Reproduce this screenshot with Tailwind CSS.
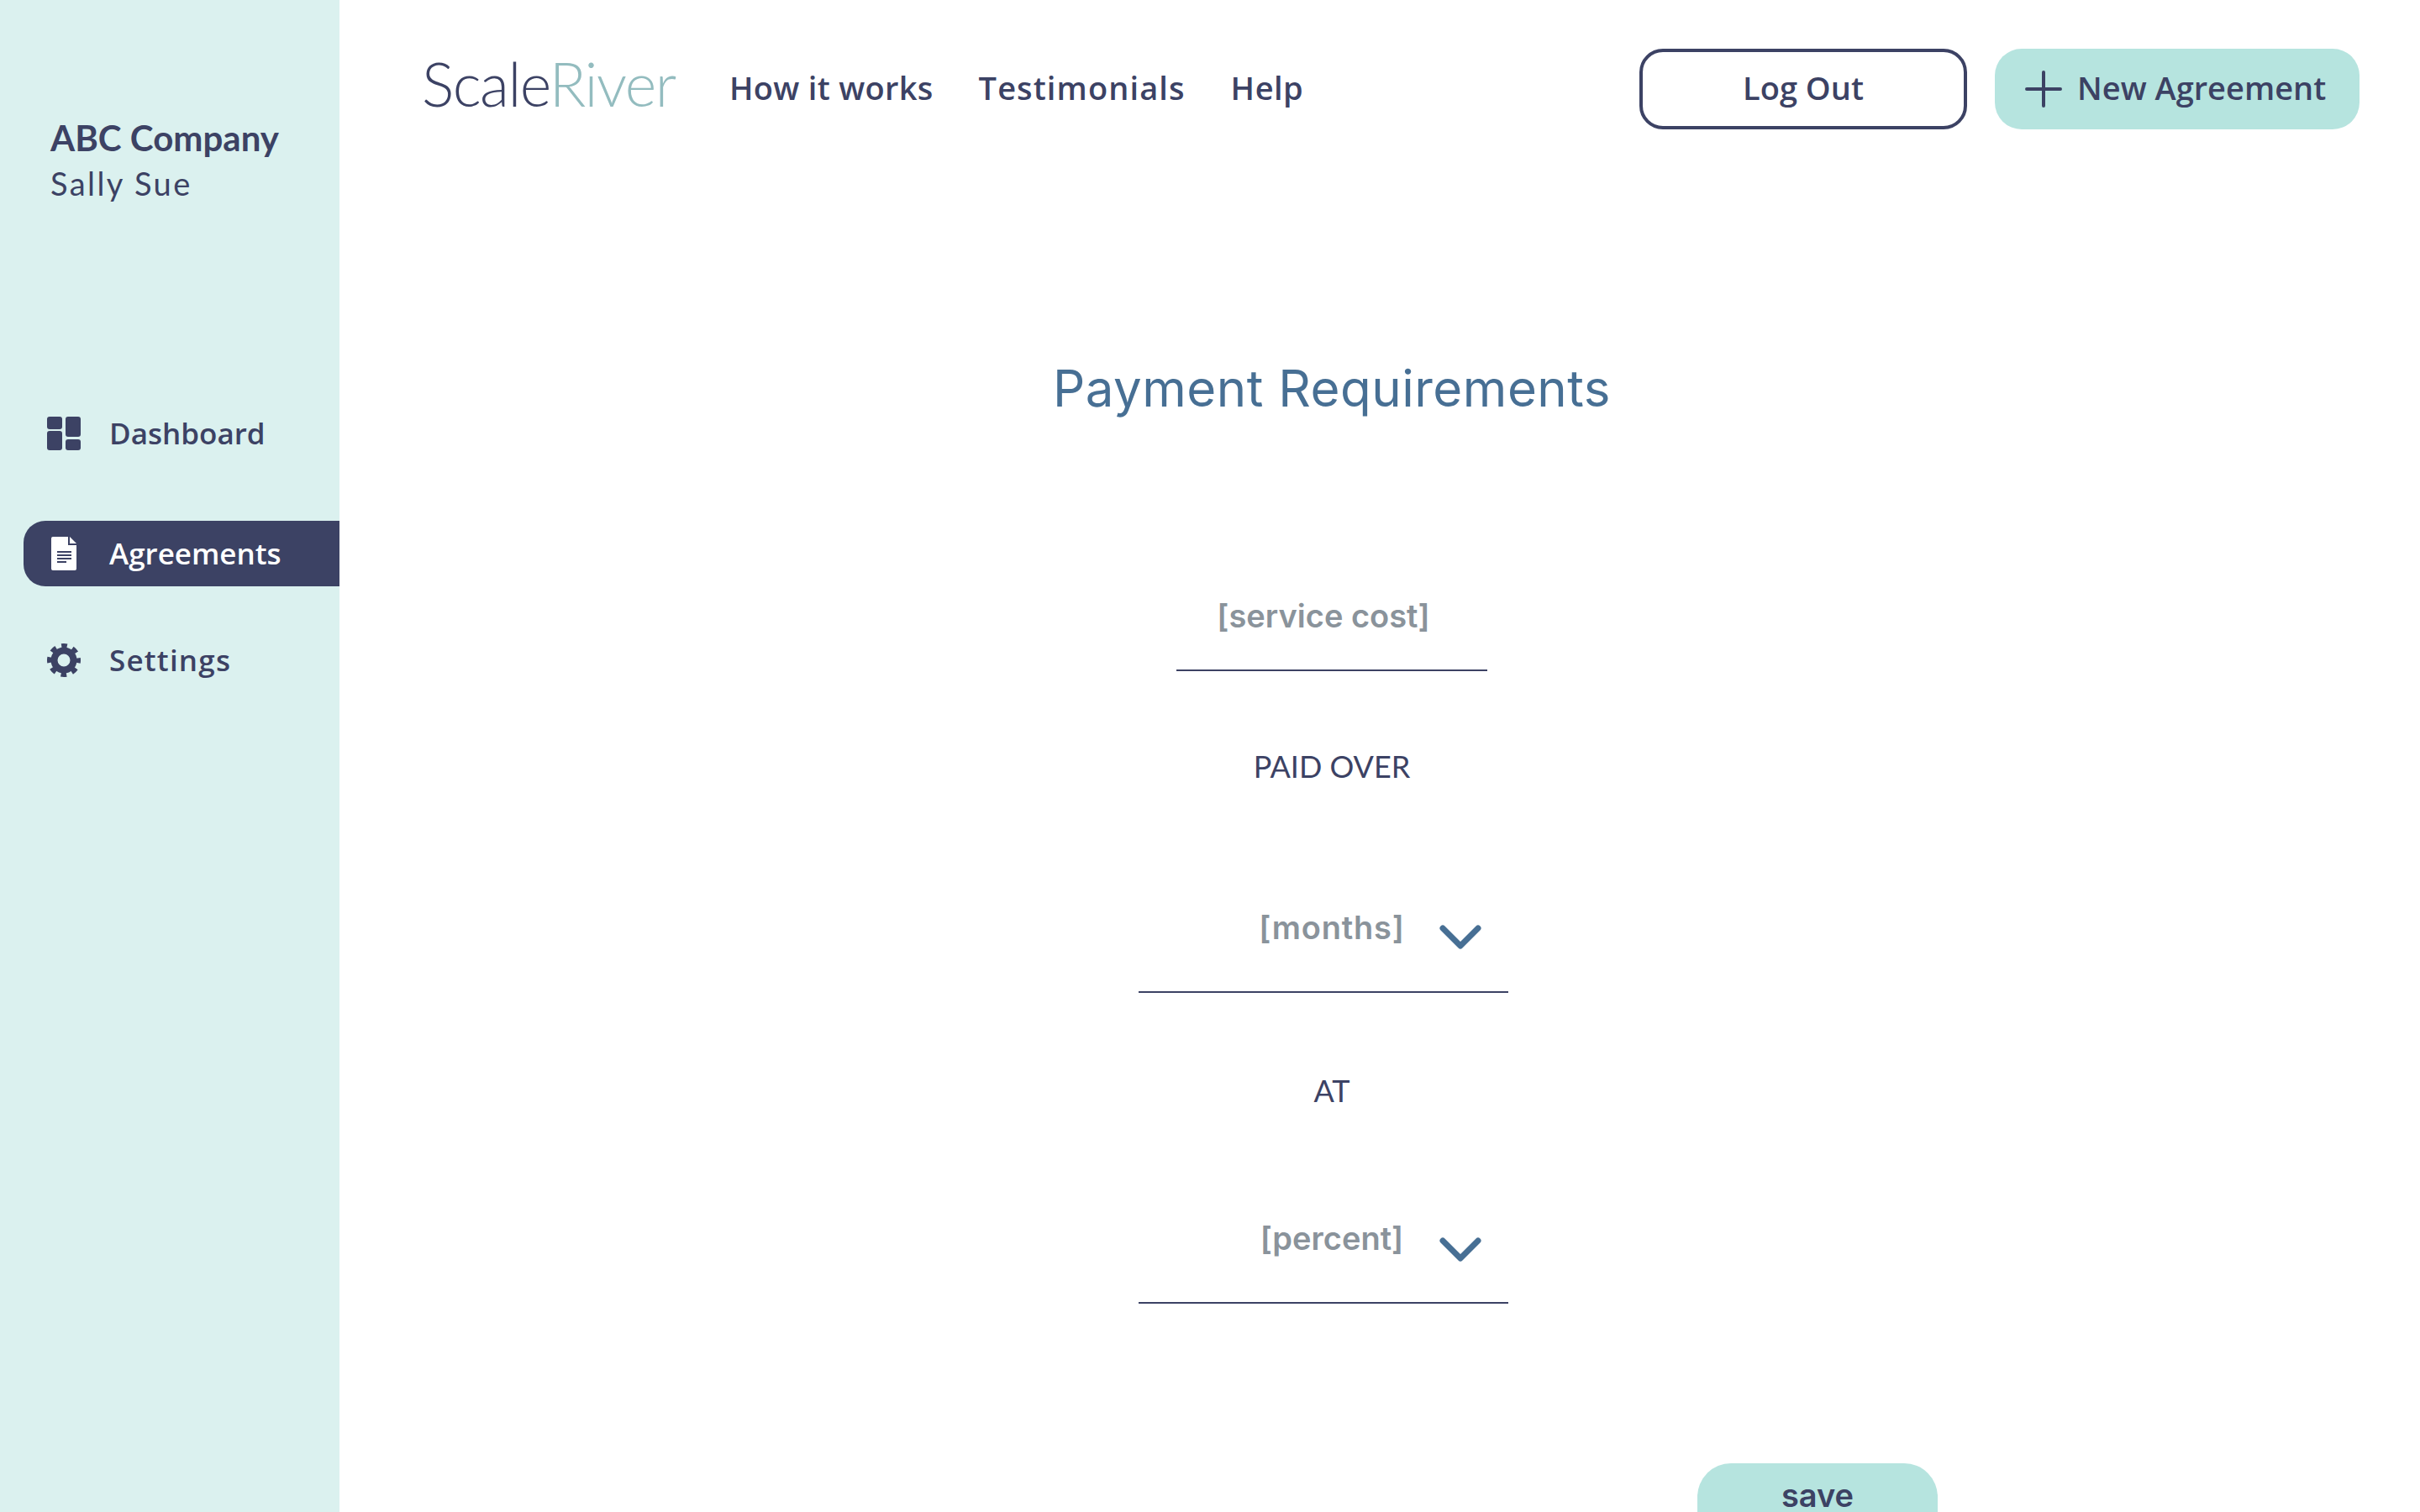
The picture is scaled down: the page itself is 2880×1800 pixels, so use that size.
<!DOCTYPE html>
<html lang="en">
<head>
    <meta charset="UTF-8">
    <title>Payment Requirements</title>
    <script src="https://cdn.jsdelivr.net/npm/@tailwindcss/browser@4"></script>
</head>
<body class="bg-white">
    <div class="flex w-[2880px] h-[1800px] overflow-hidden font-['Open_Sans',sans-serif] text-[#3c4264]">
        <!-- Sidebar -->
        <aside class="w-[404px] shrink-0 bg-[#dbf1ef] pt-[138px]">
            <div class="pl-[60px]">
                <div class="text-[42px] leading-[52px] font-bold font-['Lato',sans-serif]">ABC Company</div>
                <div class="text-[38px] leading-[56px] tracking-[2.4px] font-['Lato',sans-serif]">Sally Sue</div>
            </div>
            <nav class="mt-[231px] pl-[28px] text-[35px] leading-[48px] font-semibold">
                <a class="flex items-center h-[78px] pl-[28px] gap-[34px]">
                    <svg class="w-[40px] h-[40px]" viewBox="0 0 40 40" fill="#3c4264"><rect x="0" y="0" width="18" height="15" rx="3"/><rect x="0" y="17" width="18" height="23" rx="3"/><rect x="22" y="0" width="18" height="24" rx="3"/><rect x="22" y="27" width="18" height="13" rx="3"/></svg>
                    <span>Dashboard</span>
                </a>
                <a class="flex items-center h-[78px] mt-[65px] pl-[33px] gap-[39px] bg-[#3c4264] text-white rounded-l-[26px]">
                    <svg class="w-[30px] h-[40px]" viewBox="0 0 30 40"><path fill="#fff" d="M2 0h18v10h10v28a2 2 0 0 1-2 2H2a2 2 0 0 1-2-2V2a2 2 0 0 1 2-2z"/><path fill="#fff" d="M22 0l8 8h-8z"/><path fill="#3c4264" d="M7 17h17v2H7zM7 21h17v2H7zM7 25h17v2H7zM7 29h11v2H7z"/></svg>
                    <span>Agreements</span>
                </a>
                <a class="flex items-center h-[78px] mt-[49px] pl-[28px] gap-[34px]">
                    <svg class="w-[40px] h-[40px]" viewBox="0 0 40 40" fill="none" stroke="#3c4264"><circle cx="20" cy="20" r="11.5" stroke-width="8"/><circle cx="20" cy="20" r="17.5" stroke-width="5" stroke-dasharray="6.87 6.87" stroke-dashoffset="3.43"/></svg>
                    <span class="tracking-[1.2px]">Settings</span>
                </a>
            </nav>
        </aside>

        <main class="flex-1 min-w-0">
            <!-- Top bar -->
            <header class="flex items-center h-[96px] mt-[58px] pl-[98px] pr-[72px]">
                <div class="text-[72px] font-light tracking-[-1.5px] font-['Lato',sans-serif] leading-none w-[366px] pb-[14px]">Scale<span class="text-[#93bcbf]">River</span></div>
                <nav class="flex gap-[54px] text-[38px] font-semibold pb-[3px]">
                    <a class="tracking-[0.3px]">How it works</a>
                    <a class="tracking-[1.1px]">Testimonials</a>
                    <a class="tracking-[0.5px]">Help</a>
                </nav>
                <button class="ml-auto w-[390px] h-[96px] border-[4px] border-[#3c4264] rounded-[28px] text-[38px] font-semibold pb-[3px]">Log Out</button>
                <button class="ml-[33px] w-[434px] h-[96px] bg-[#b6e4df] rounded-[32px] flex items-center pl-[35px] gap-[17px] text-[38px] font-semibold">
                    <svg class="w-[46px] h-[46px]" viewBox="0 0 46 46" stroke="#3c4264" stroke-width="4" stroke-linecap="round"><path d="M23 3v40M3 23h40"/></svg>
                    <span class="pb-[3px]">New Agreement</span>
                </button>
            </header>

            <!-- Form -->
            <section class="flex flex-col items-center pr-[114px] mt-[270px] font-['Inter',sans-serif]">
                <h1 class="text-[60px] leading-[76px] tracking-[0.5px] text-[#476f94]">Payment Requirements</h1>

                <div class="w-[370px] h-[96px] mt-[203px] pt-[2px] border-b-[2px] border-[#3c4264] text-center text-[38px] font-semibold text-[#8a939b] pr-[20px]">[service cost]</div>
                <div class="mt-[89px] text-[36px] leading-[48px] font-['Lato',sans-serif]">PAID OVER</div>

                <div class="relative w-[440px] h-[108px] mt-[138px] pt-[2px] -translate-x-[10px] border-b-[2px] border-[#3c4264] text-center text-[38px] font-semibold tracking-[0.8px] text-[#8a939b] pl-[20px]">
                    [months]
                    <svg class="absolute right-[32px] top-[26px] w-[50px] h-[30px]" viewBox="0 0 50 30" fill="none" stroke="#476f94" stroke-width="7" stroke-linecap="round" stroke-linejoin="round"><path d="M4 5l21 21L46 5"/></svg>
                </div>
                <div class="mt-[92px] text-[36px] leading-[48px] font-['Lato',sans-serif]">AT</div>

                <div class="relative w-[440px] h-[108px] mt-[122px] pt-[2px] -translate-x-[10px] border-b-[2px] border-[#3c4264] text-center text-[38px] font-semibold text-[#8a939b] pl-[20px]">
                    [percent]
                    <svg class="absolute right-[32px] top-[28px] w-[50px] h-[30px]" viewBox="0 0 50 30" fill="none" stroke="#476f94" stroke-width="7" stroke-linecap="round" stroke-linejoin="round"><path d="M4 5l21 21L46 5"/></svg>
                </div>

                <!-- button runs off the bottom of the window in the design -->
                <button class="mt-[190px] ml-[1156px] w-[286px] h-[58px] shrink-0 bg-[#b6e4df] rounded-t-[40px] text-[38px] leading-[40px] font-semibold pt-[18px]">save</button>
            </section>
        </main>
    </div>
</body>
</html>
